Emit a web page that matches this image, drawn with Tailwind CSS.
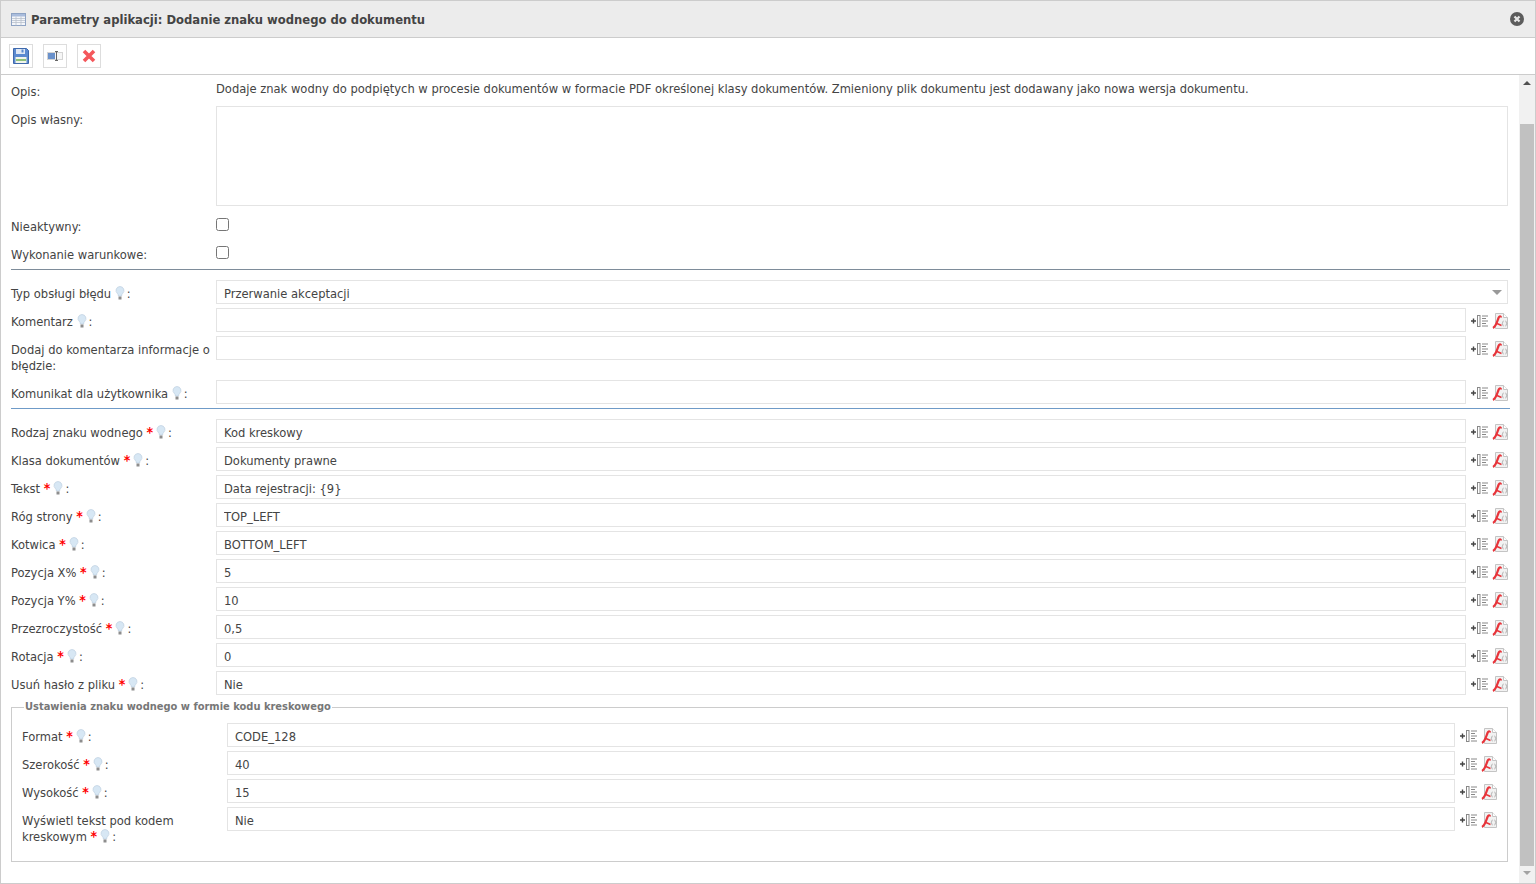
<!DOCTYPE html>
<html lang="pl">
<head>
    <meta charset="UTF-8">
    <title>Parametry aplikacji</title>
    <script src="https://cdn.jsdelivr.net/npm/@tailwindcss/browser@4"></script>
</head>
<body class="h-[884px] overflow-hidden bg-white font-['DejaVu_Sans_Condensed','DejaVu_Sans',sans-serif] text-[12.8px] leading-[16px] text-[#444]">
    <svg class="hidden">
        <symbol id="bulb" viewBox="0 0 10 14">
            <path d="M5 .5a4 4 0 0 0-2.600 7c.6.6.9 1.200 1 2.500h3.200c.1-1.300.4-1.900 1-2.500A4 4 0 0 0 5 .5z" fill="#d7e7f4" stroke="#bccfdf" stroke-width=".7"/>
            <rect x="3.500" y="10.500" width="3" height="3" fill="#8d8d8d"/>
        </symbol>
        <symbol id="varicon" viewBox="0 0 18 12">
            <path d="M0 6h5M2.500 3.500v5" fill="none" stroke="#444" stroke-width="1.400"/>
            <rect x="6.500" y=".5" width="2.500" height="11" fill="#fff" stroke="#888"/>
            <path d="M11 1h6M11 3.500h4M11 6h6M11 8.500h4M11 11h6" stroke="#888"/>
        </symbol>
        <symbol id="pdficon" viewBox="0 0 16 16">
            <path d="M3.500.5h8l4 4v11h-12z" fill="#f2f2f2" stroke="#c4c4c4"/>
            <path d="M11.500.5v4h4" fill="#fff" stroke="#c4c4c4"/>
            <path d="M1 15c3-1.500 4-6 5.500-10 .7-2 2.500-2 2.500-.5" fill="none" stroke="#e8343a" stroke-width="2.200"/>
            <path d="M5 10.500l4.500 2" fill="none" stroke="#e8343a" stroke-width="1.500"/>
            <path d="M11.500 8c-1 0-.6 2-1.200 2.500.6.500.2 2.500 1.200 2.500M13.500 8c1 0 .6 2 1.200 2.500-.6.500-.2 2.500-1.200 2.500" fill="none" stroke="#999" stroke-width=".8"/>
        </symbol>
    </svg>

    <div class="flex h-[884px] flex-col border border-[#ccc]">
        <!-- Title bar -->
        <header class="flex h-[37px] shrink-0 items-center justify-between border-b border-[#ccc] bg-[#ececec] pl-[10px] pr-[11px]">
            <h1 class="flex items-center gap-[5px] pt-[1px] text-[12.9px] font-bold text-[#444]">
                <svg class="-mt-[1px]" width="15" height="13" viewBox="0 0 15 13">
                    <rect x=".5" y=".5" width="14" height="12" fill="#f4f6fa" stroke="#8ea3c4"/>
                    <rect x="1" y="1" width="13" height="2.500" fill="#a9bcdc"/>
                    <path d="M1 5.500h13M1 7.500h13M1 9.500h13M5 3.500v9M10 3.500v9" stroke="#b9c1cd" stroke-width=".8"/>
                </svg>
                Parametry aplikacji: Dodanie znaku wodnego do dokumentu
            </h1>
            <svg width="14" height="14" viewBox="0 0 14 14">
                <circle cx="7" cy="7" r="7" fill="#5c5c5c"/>
                <path d="M4.500 4.500l5 5M9.500 4.500l-5 5" stroke="#e8e8e8" stroke-width="2.200"/>
            </svg>
        </header>

        <!-- Toolbar -->
        <div class="flex h-[37px] shrink-0 items-center gap-[10px] border-b border-[#ccc] pb-[1px] pl-[8px]">
            <button class="flex h-[24px] w-[24px] items-center justify-center border border-[#ddd]">
                <svg width="16" height="16" viewBox="0 0 16 16">
                    <path d="M.5.5h13l2 2v13H.5z" fill="#5b8ad0" stroke="#3f69ac"/>
                    <rect x="3" y="1" width="9" height="5" fill="#dfe8f5"/>
                    <rect x="8.500" y="1.500" width="2" height="3" fill="#5b8ad0"/>
                    <rect x="2.500" y="9" width="11" height="6" fill="#f2f5ea"/>
                    <rect x="3" y="11" width="10" height="2" fill="#8cc07a"/>
                </svg>
            </button>
            <button class="flex h-[24px] w-[24px] items-center justify-center border border-[#ddd]">
                <svg width="16" height="10" viewBox="0 0 16 10">
                    <rect x=".5" y="1.500" width="15" height="7" fill="#f6f6f6" stroke="#d4d4d4"/>
                    <rect x="1" y="2" width="7" height="6" fill="#6a91cb"/>
                    <path d="M8 .5h3M9.500.5v9M8 9.500h3" stroke="#666"/>
                </svg>
            </button>
            <button class="flex h-[24px] w-[24px] items-center justify-center border border-[#ddd]">
                <svg width="14" height="14" viewBox="0 0 14 14">
                    <path d="M2 2l10 10M12 2L2 12" stroke="#f4575b" stroke-width="3.600"/>
                </svg>
            </button>
        </div>

        <div class="flex min-h-0 flex-1">
            <!-- Form -->
            <main class="min-w-0 flex-1 pl-[10px] pr-[11px] pt-[3px]">
                <div class="flex h-[28px]">
                    <label class="w-[205px] shrink-0 pt-[6px]">Opis:</label>
                    <p class="pt-[3px]">Dodaje znak wodny do podpiętych w procesie dokumentów w formacie PDF określonej klasy dokumentów. Zmieniony plik dokumentu jest dodawany jako nowa wersja dokumentu.</p>
                </div>
                <div class="mb-[8px] flex">
                    <label class="w-[205px] shrink-0 pt-[6px]">Opis własny:</label>
                    <textarea class="h-[100px] flex-1 resize-none border border-[#e4e4e4]"></textarea>
                </div>
                <div class="mb-[4px] flex h-[24px]">
                    <label class="w-[205px] shrink-0 pt-[5px]">Nieaktywny:</label>
                    <input type="checkbox" class="mt-[4px] h-[13px] w-[13px]">
                </div>
                <div class="flex h-[24px]">
                    <label class="w-[205px] shrink-0 pt-[5px]">Wykonanie warunkowe:</label>
                    <input type="checkbox" class="mt-[4px] h-[13px] w-[13px]">
                </div>
                <hr class="mb-[10px] -mr-[2px] mt-[3px] border-t border-[#7e8c9a]">

                <div class="mb-[4px] flex">
                    <label class="w-[205px] shrink-0 pb-[2px] pt-[6px]">Typ obsługi błędu <svg class="inline-block h-[14px] w-[10px] align-[-2px]"><use href="#bulb"/></svg><span class="ml-[2px]">:</span></label>
                    <div class="relative flex-1">
                        <select class="h-[24px] w-full appearance-none border border-[#e4e4e4] pl-[7px] pt-[3px]"><option>Przerwanie akceptacji</option></select>
                        <span class="absolute right-[6px] top-[10px] h-0 w-0 border-x-[5px] border-t-[5px] border-x-transparent border-t-[#999]"></span>
                    </div>
                </div>
                <div id="group1"></div>
                <hr class="mb-[10px] -mr-[2px] border-t border-[#6f9bc8]">
                <div id="group2"></div>

                <fieldset class="mt-[3px] h-[163px] border border-[#ccc] px-[10px]">
                    <legend class="ml-[2px] px-[1px] text-[11px] font-bold text-[#777]">Ustawienia znaku wodnego w formie kodu kreskowego</legend>
                    <div id="group3" class="pt-[8px]"></div>
                </fieldset>
            </main>

            <!-- Scrollbar -->
            <aside class="flex w-[16px] shrink-0 flex-col items-center bg-[#f1f1f1]">
                <span class="mt-[6px] h-0 w-0 border-x-[4px] border-b-[4px] border-x-transparent border-b-[#505050]"></span>
                <span class="mt-[39px] h-[742px] w-[14px] bg-[#c1c1c1]"></span>
                <span class="mt-[5px] h-0 w-0 border-x-[4px] border-t-[4px] border-x-transparent border-t-[#a3a3a3]"></span>
            </aside>
        </div>
    </div>

    <script>
        const bulb = '<svg class="inline-block h-[14px] w-[10px] align-[-2px]"><use href="#bulb"/></svg>';
        const star = '<span class="mr-[3px] text-[14px] leading-[0] font-bold text-[#f00]">*</span>';
        const colon = '<span class="ml-[2px]">:</span>';

        function row(item) {
            const mark = item.req ? ` ${star}${bulb}${colon}` : (item.hint ? ` ${bulb}${colon}` : ':');
            return `<div class="mb-[4px] flex">
                <label class="w-[205px] shrink-0 pb-[2px] pt-[6px]">${item.label}${mark}</label>
                <input class="h-[24px] min-w-0 flex-1 border border-[#e4e4e4] pl-[7px] pt-[2px] text-[#444]" value="${item.value || ''}">
                <span class="flex h-[24px] w-[42px] shrink-0 items-center pl-[5px] pt-[2px]">
                    <svg class="h-[12px] w-[18px]"><use href="#varicon"/></svg>
                    <svg class="ml-[3px] h-[16px] w-[16px]"><use href="#pdficon"/></svg>
                </span>
            </div>`;
        }

        document.getElementById('group1').innerHTML = [
            { label: 'Komentarz', hint: true },
            { label: 'Dodaj do komentarza informacje o błędzie' },
            { label: 'Komunikat dla użytkownika', hint: true }
        ].map(row).join('');

        document.getElementById('group2').innerHTML = [
            { label: 'Rodzaj znaku wodnego', value: 'Kod kreskowy' },
            { label: 'Klasa dokumentów', value: 'Dokumenty prawne' },
            { label: 'Tekst', value: 'Data rejestracji: {9}' },
            { label: 'Róg strony', value: 'TOP_LEFT' },
            { label: 'Kotwica', value: 'BOTTOM_LEFT' },
            { label: 'Pozycja X%', value: '5' },
            { label: 'Pozycja Y%', value: '10' },
            { label: 'Przezroczystość', value: '0,5' },
            { label: 'Rotacja', value: '0' },
            { label: 'Usuń hasło z pliku', value: 'Nie' }
        ].map(item => row({ ...item, req: true })).join('');

        document.getElementById('group3').innerHTML = [
            { label: 'Format', value: 'CODE_128' },
            { label: 'Szerokość', value: '40' },
            { label: 'Wysokość', value: '15' },
            { label: 'Wyświetl tekst pod kodem kreskowym', value: 'Nie' }
        ].map(item => row({ ...item, req: true })).join('');
    </script>
</body>
</html>
